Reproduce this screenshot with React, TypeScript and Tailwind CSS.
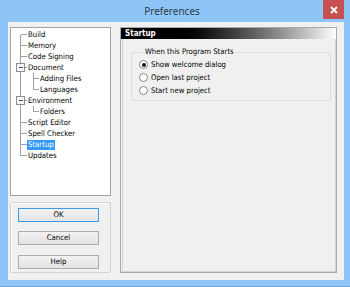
import React from 'react';

type Node = {
  label: string;
  level: 0 | 1;
  expander?: boolean;
  first?: boolean;
  last?: boolean;
  lastChild?: boolean;
  selected?: boolean;
};

const nodes: Node[] = [
  { label: 'Build', level: 0, first: true },
  { label: 'Memory', level: 0 },
  { label: 'Code Signing', level: 0 },
  { label: 'Document', level: 0, expander: true },
  { label: 'Adding Files', level: 1 },
  { label: 'Languages', level: 1, lastChild: true },
  { label: 'Environment', level: 0, expander: true },
  { label: 'Folders', level: 1, lastChild: true },
  { label: 'Script Editor', level: 0 },
  { label: 'Spell Checker', level: 0 },
  { label: 'Startup', level: 0, selected: true },
  { label: 'Updates', level: 0, last: true },
];

const ui = "font-['DejaVu_Sans_Condensed','DejaVu_Sans',sans-serif] text-[7.7px] text-black";

function Gutter({ node }: { node: Node }) {
  const w = node.level === 0 ? 17 : 29;
  return (
    <svg width={w} height={11} className="shrink-0" shapeRendering="crispEdges">
      <line x1={9.5} x2={9.5} y1={node.first ? 5.5 : 0} y2={node.last ? 5.5 : 11} stroke="#a0a0a0" />
      {node.level === 0 && <line x1={9.5} x2={16} y1={5.5} y2={5.5} stroke="#a0a0a0" />}
      {node.level === 1 && (
        <>
          <line x1={22.5} x2={22.5} y1={0} y2={node.lastChild ? 5.5 : 11} stroke="#a0a0a0" />
          <line x1={22.5} x2={28} y1={5.5} y2={5.5} stroke="#a0a0a0" />
        </>
      )}
      {node.expander && (
        <>
          <rect x={5.5} y={1.5} width={8} height={8} fill="#f4f4f4" stroke="#8f8f8f" />
          <line x1={7.5} x2={12} y1={5.5} y2={5.5} stroke="#3c5a86" />
        </>
      )}
    </svg>
  );
}

function Radio({ checked, label }: { checked?: boolean; label: string }) {
  return (
    <div className="flex items-center gap-[3px] h-[13px]">
      <span className="w-[9px] h-[9px] rounded-full border border-[#8a8a8a] bg-white flex items-center justify-center shrink-0">
        {checked && <span className="w-[4px] h-[4px] rounded-full bg-[#1a1a1a]" />}
      </span>
      <span>{label}</span>
    </div>
  );
}

function Button({ label, focused }: { label: string; focused?: boolean }) {
  return (
    <div
      className={`w-[81px] h-[14px] ml-[7px] flex items-center justify-center border bg-gradient-to-b from-[#f2f2f2] to-[#e3e3e3] ${
        focused ? 'border-[#3c9be6]' : 'border-[#acacac]'
      }`}
    >
      {label}
    </div>
  );
}

export default function App() {
  return (
    <div className={`w-[350px] h-[287px] bg-[#8dc6f6] flex flex-col border-b border-[#6fa9da] ${ui}`}>
      <div className="h-[22px] flex items-start shrink-0">
        <div className="flex-1" />
        <div className="h-[22px] flex items-center font-['Noto_Sans',sans-serif] text-[10px] text-[#2e3a46]">
          Preferences
        </div>
        <div className="flex-1 flex justify-end pr-[6px]">
          <div className="w-[21px] h-[19px] bg-[#c75050] flex items-center justify-center">
            <svg width="8" height="8" viewBox="0 0 8 8">
              <path d="M1 1 L7 7 M7 1 L1 7" stroke="#fff" strokeWidth="1.8" />
            </svg>
          </div>
        </div>
      </div>

      <div className="flex-1 ml-[8px] mr-[6px] mb-[6px] bg-[#f0f0f0] flex gap-[9px] pl-[2px] pr-[7px] pt-[5px] pb-[7px]">
        <div className="w-[101px] flex flex-col gap-[6px]">
          <div className="h-[169px] bg-white border border-[#a3a3a3] pt-[1px]">
            {nodes.map((n) => (
              <div key={n.label} className="h-[11px] flex items-center">
                <Gutter node={n} />
                <span
                  className={`leading-[10px] px-[1px] -ml-[1px] ${
                    n.selected ? 'bg-[#3399ff] text-white' : ''
                  }`}
                >
                  {n.label}
                </span>
              </div>
            ))}
          </div>
          <div className="flex-1 border border-[#d2d2d2] rounded-[2px] shadow-[inset_1px_1px_0_#fff] pt-[5px] flex flex-col">
            <Button label="OK" focused />
            <div className="h-[9px]" />
            <Button label="Cancel" />
            <div className="h-[10px]" />
            <Button label="Help" />
          </div>
        </div>

        <div className="w-[217px] flex flex-col border border-[#a9a9a9]">
          <div className="h-[11px] bg-gradient-to-r from-black from-25% to-white flex items-center pl-[4px]">
            <span className="text-white font-bold text-[8px]">Startup</span>
          </div>
          <div className="flex-1 border-l border-[#d3d3d3] border-b border-r ml-[1px] pl-[8px] pt-[8px] pr-[6px]">
            <fieldset className="border border-[#d8dde2] rounded-[2px] pl-[7px] pb-[3px] w-[200px]">
              <legend className="ml-[5px] px-[1px] leading-[10px]">When this Program Starts</legend>
              <div className="pt-[1px]">
                <Radio checked label="Show welcome dialog" />
                <Radio label="Open last project" />
                <Radio label="Start new project" />
              </div>
            </fieldset>
          </div>
        </div>
      </div>
    </div>
  );
}
